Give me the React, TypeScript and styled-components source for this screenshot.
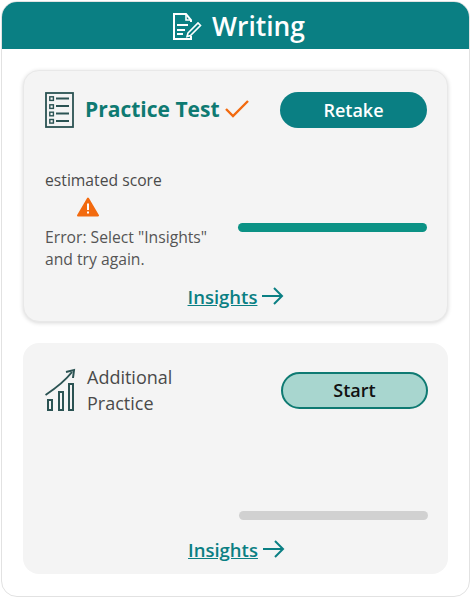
import styled, { createGlobalStyle } from "styled-components";

const GlobalStyle = createGlobalStyle`
  html, body {
    margin: 0;
    padding: 0;
    background: #ffffff;
    font-family: "Open Sans", "Liberation Sans", sans-serif;
  }
`;

const Panel = styled.div`
  box-sizing: border-box;
  width: 469px;
  height: 596px;
  margin: 1px 0 0 1px;
  border: 1px solid #e2e2e2;
  border-radius: 16px;
  overflow: hidden;
  background: #fff;
`;
const Header = styled.header`
  box-sizing: border-box;
  height: 47px;
  padding-left: 6px;
  background: #0a7f83;
  color: #fff;
  display: flex;
  justify-content: center;
  align-items: center;
  gap: 10px;
  font-size: 26.4px;
  font-weight: 600;
`;
const Body = styled.div`
  padding: 21px 21px 0 21px;
  display: flex;
  flex-direction: column;
  gap: 21px;
`;
const Card = styled.section<{ $raised?: boolean }>`
  box-sizing: border-box;
  height: ${(p) => (p.$raised ? "252px" : "231px")};
  background: #f4f4f4;
  border-radius: 16px;
  padding: ${(p) => (p.$raised ? "19px 20px 0 21px" : "28px 20px 0 22px")};
  display: flex;
  flex-direction: column;
  border: ${(p) => (p.$raised ? "1px solid #e8e8e8" : "none")};
  box-shadow: ${(p) => (p.$raised ? "0 1px 4px rgba(0,0,0,0.16)" : "none")};
`;
const TopRow = styled.div`
  display: flex;
  justify-content: space-between;
  align-items: center;
  height: 38px;
`;
const TitleGroup = styled.div`
  display: flex;
  align-items: center;
`;
const Title = styled.h2`
  margin: 0 5px 0 11px;
  font-size: 21px;
  font-weight: 700;
  color: #0e7a72;
`;
const SubTitle = styled.h2`
  margin: 0 0 0 10px;
  width: 110px;
  font-size: 18px;
  line-height: 26px;
  font-weight: 400;
  color: #4a4a4a;
`;
const PrimaryButton = styled.button`
  width: 147px;
  height: 36px;
  margin-top: 2px;
  border: none;
  border-radius: 18px;
  background: #0a7f83;
  color: #fff;
  font: 600 18px "Open Sans", sans-serif;
`;
const SecondaryButton = styled.button`
  width: 147px;
  height: 37px;
  border: 2px solid #0e7a72;
  border-radius: 19px;
  background: #a8d6cf;
  color: #111;
  font: 600 18px "Open Sans", sans-serif;
`;
const Middle = styled.div<{ $labelWidth: number }>`
  flex: 1;
  display: grid;
  grid-template-columns: ${(p) => p.$labelWidth}px 1fr;
  align-items: end;
`;
const ScoreColumn = styled.div`
  display: flex;
  flex-direction: column;
  font-size: 15.7px;
  color: #4a4a4a;
  margin-bottom: 3px;
`;
const ScoreLabel = styled.span`
  line-height: 22px;
`;
const WarnIcon = styled.svg`
  display: block;
  margin: 6px 0 9px 32px;
`;
const ChecklistSvg = styled.svg`
  margin-top: 2px;
`;
const ErrorText = styled.span`
  line-height: 22px;
  color: #555;
`;
const Track = styled.div<{ $active?: boolean }>`
  height: 9px;
  border-radius: 5px;
  background: ${(p) => (p.$active ? "#0b9285" : "#d1d1d1")};
  margin-bottom: ${(p) => (p.$active ? "41px" : "6px")};
`;
const Footer = styled.div`
  box-sizing: border-box;
  height: 48px;
  padding-bottom: 2px;
  display: flex;
  justify-content: center;
  align-items: center;
  gap: 4px;
  color: #0a7f83;
`;
const InsightsLink = styled.a`
  font-size: 18.5px;
  font-weight: 600;
  color: #0a7f83;
  text-decoration: underline;
`;

function PaperPen() {
  return (
    <svg width="30" height="28" viewBox="0 0 30 28" fill="none" stroke="#fff" strokeWidth="2">
      <path d="M19 24v3H2V2h12l5 6v2" />
      <path d="M14 2v6h5" strokeWidth="1.6" />
      <path d="M5 13h11M5 18h8M5 22h6" />
      <path d="M16 21l10-10 2.5 2.5-10 10-3.5 1z" strokeWidth="1.6" />
    </svg>
  );
}

function ChecklistIcon() {
  return (
    <ChecklistSvg width="29" height="36" viewBox="0 0 29 36" fill="none" stroke="#2b5353" strokeWidth="1.8">
      <rect x="1" y="1" width="27" height="34" />
      <rect x="4.8" y="4.8" width="3.6" height="3.6" strokeWidth="1.4" />
      <rect x="4.8" y="12.8" width="3.6" height="3.6" strokeWidth="1.4" />
      <rect x="4.8" y="20.2" width="3.6" height="3.6" strokeWidth="1.4" />
      <rect x="4.8" y="27.5" width="3.6" height="3.6" strokeWidth="1.4" />
      <path d="M11 6.5h13M11 14h13M11 21.5h13M11 29h13" />
    </ChecklistSvg>
  );
}

function GrowthIcon() {
  return (
    <svg width="32" height="44" viewBox="0 0 32 44" fill="none" stroke="#2b5353" strokeWidth="2">
      <path d="M0.5 27C11 20 20 13 27 4" />
      <path d="M21 4l8-2-1 8" />
      <rect x="3" y="32" width="4" height="10" />
      <rect x="14" y="24" width="4" height="18" />
      <rect x="24" y="16" width="4" height="26" />
    </svg>
  );
}

function Check() {
  return (
    <svg width="24" height="18" viewBox="0 0 24 18" fill="none" stroke="#f26a0f" strokeWidth="2.4">
      <path d="M1 9l7 7L23 1" />
    </svg>
  );
}

function Warning() {
  return (
    <WarnIcon width="22" height="20" viewBox="0 0 22 20">
      <path
        d="M11 1.5L21 18.5H1z"
        fill="#f26a0f"
        stroke="#f26a0f"
        strokeWidth="2"
        strokeLinejoin="round"
      />
      <path d="M11 6.5v6.5M11 14.5v2" stroke="#fff" strokeWidth="2" />
    </WarnIcon>
  );
}

function Arrow() {
  return (
    <svg width="23" height="18" viewBox="0 0 23 18" fill="none" stroke="#0a7f83" strokeWidth="2">
      <path d="M1 9h20M13 1l8 8-8 8" />
    </svg>
  );
}

export default function App() {
  return (
    <>
      <GlobalStyle />
      <Panel>
        <Header>
          <PaperPen />
          Writing
        </Header>
        <Body>
          <Card $raised>
            <TopRow>
              <TitleGroup>
                <ChecklistIcon />
                <Title>Practice Test</Title>
                <Check />
              </TitleGroup>
              <PrimaryButton>Retake</PrimaryButton>
            </TopRow>
            <Middle $labelWidth={193}>
              <ScoreColumn>
                <ScoreLabel>estimated score</ScoreLabel>
                <Warning />
                <ErrorText>
                  Error: Select "Insights"
                  <br />
                  and try again.
                </ErrorText>
              </ScoreColumn>
              <Track $active />
            </Middle>
            <Footer>
              <InsightsLink>Insights</InsightsLink>
              <Arrow />
            </Footer>
          </Card>
          <Card>
            <TopRow>
              <TitleGroup>
                <GrowthIcon />
                <SubTitle>Additional Practice</SubTitle>
              </TitleGroup>
              <SecondaryButton>Start</SecondaryButton>
            </TopRow>
            <Middle $labelWidth={194}>
              <span />
              <Track />
            </Middle>
            <Footer>
              <InsightsLink>Insights</InsightsLink>
              <Arrow />
            </Footer>
          </Card>
        </Body>
      </Panel>
    </>
  );
}
